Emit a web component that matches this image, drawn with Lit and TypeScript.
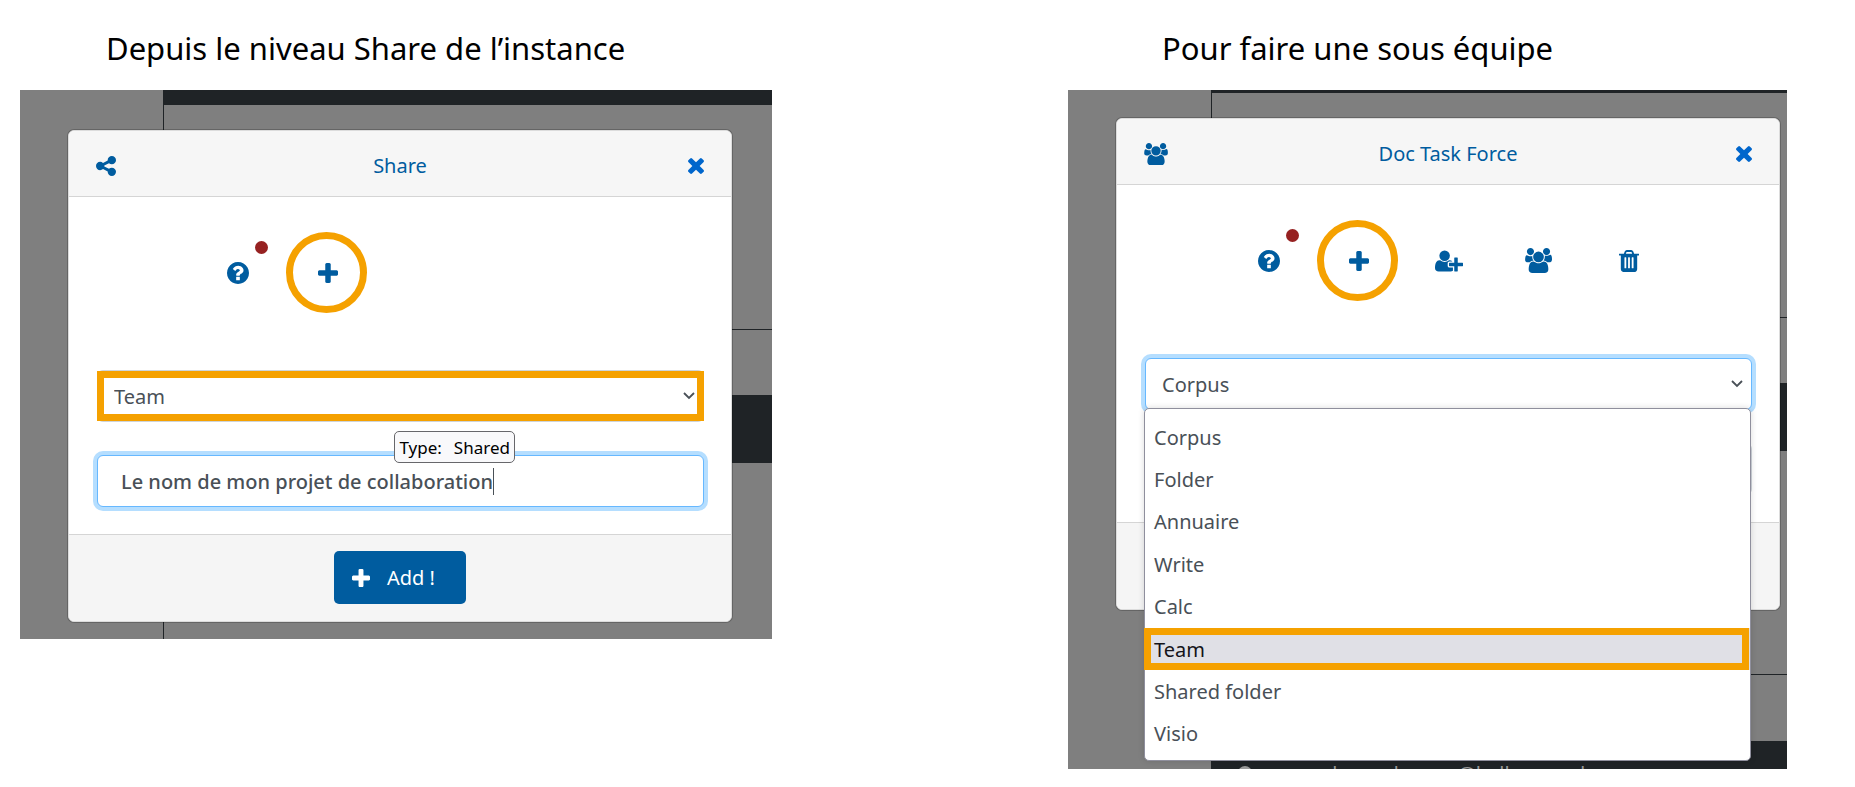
import { LitElement, html, css, nothing } from "lit";
import { customElement, property } from "lit/decorators.js";

type Glyph = { box: string; path: string };

const GLYPHS: Record<string, Glyph> = {
  share: {
    box: "0 128 1536 1536",
    path: "M1216 1024q133 0 226.500 93.500t93.500 226.500-93.500 226.500-226.500 93.500-226.500-93.500-93.500-226.500q0-12 2-34l-360-180q-92 86-218 86-133 0-226.500-93.500t-93.500-226.500 93.500-226.500 226.500-93.500q126 0 218 86l360-180q-2-22-2-34 0-133 93.500-226.500t226.500-93.500 226.500 93.500 93.500 226.500-93.500 226.500-226.500 93.500q-126 0-218-86l-360 180q2 22 2 34t-2 34l360 180q92-86 218-86z",
  },
  plus: {
    box: "0 0 1408 1408",
    path: "M1408 608v192q0 40-28 68t-68 28h-416v416q0 40-28 68t-68 28h-192q-40 0-68-28t-28-68v-416h-416q-40 0-68-28t-28-68v-192q0-40 28-68t68-28h416v-416q0-40 28-68t68-28h192q40 0 68 28t28 68v416h416q40 0 68 28t28 68z",
  },
  close: {
    box: "110 366 1188 1188",
    path: "M1298 1322q0 40-28 68l-136 136q-28 28-68 28t-68-28l-294-294-294 294q-28 28-68 28t-68-28l-136-136q-28-28-28-68t28-68l294-294-294-294q-28-28-28-68t28-68l136-136q28-28 68-28t68 28l294 294 294-294q28-28 68-28t68 28l136 136q28 28 28 68t-28 68l-294 294 294 294q28 28 28 68z",
  },
  help: {
    box: "128 128 1536 1536",
    path: "M1024 1376v-192q0-14-9-23t-23-9h-192q-14 0-23 9t-9 23v192q0 14 9 23t23 9h192q14 0 23-9t9-23zm256-672q0-88-55.500-163t-138.500-116-170-41q-243 0-371 213-15 24 8 42l132 100q7 6 19 6 16 0 25-12 53-68 86-92 34-24 86-24 48 0 85.500 26t37.500 59q0 38-20 61t-68 45q-63 28-115.500 86.500t-52.500 125.500v36q0 14 9 23t23 9h192q14 0 23-9t9-23q0-19 21.500-49.500t54.500-49.500q32-18 49-28.500t46-35 44.500-48 28-60.500 12.500-81zm384 192q0 209-103 385.500t-279.500 279.500-385.500 103-385.500-103-279.500-279.500-103-385.500 103-385.500 279.500-279.500 385.500-103 385.500 103 279.500 279.500 103 385.500z",
  },
  trash: {
    box: "192 128 1408 1536",
    path: "M704 1376v-704q0-14-9-23t-23-9h-64q-14 0-23 9t-9 23v704q0 14 9 23t23 9h64q14 0 23-9t9-23zm256 0v-704q0-14-9-23t-23-9h-64q-14 0-23 9t-9 23v704q0 14 9 23t23 9h64q14 0 23-9t9-23zm256 0v-704q0-14-9-23t-23-9h-64q-14 0-23 9t-9 23v704q0 14 9 23t23 9h64q14 0 23-9t9-23zm-544-992h448l-48-117q-7-9-17-11h-317q-10 2-17 11zm928 32v64q0 14-9 23t-23 9h-96v948q0 83-47 143.500t-113 60.500h-832q-66 0-113-58.500t-47-141.500v-952h-96q-14 0-23-9t-9-23v-64q0-14 9-23t23-9h309l70-167q15-37 54-63t79-26h320q40 0 79 26t54 63l70 167h309q14 0 23 9t9 23z",
  },
  userPlus: {
    box: "0 128 2048 1536",
    path: "M704 896q-159 0-271.500-112.500t-112.500-271.500 112.500-271.500 271.500-112.500 271.500 112.500 112.500 271.500-112.500 271.500-271.500 112.500zm960 128h352q13 0 22.500 9.500t9.500 22.500v192q0 13-9.500 22.500t-22.500 9.500h-352v352q0 13-9.500 22.500t-22.500 9.500h-192q-13 0-22.500-9.500t-9.500-22.500v-352h-352q-13 0-22.500-9.500t-9.500-22.500v-192q0-13 9.500-22.500t22.500-9.500h352v-352q0-13 9.500-22.500t22.500-9.500h192q13 0 22.500 9.500t9.500 22.500v352zm-736 224q0 52 38 90t90 38h256v238q-68 50-171 50h-874q-121 0-194-69t-73-190q0-53 3.500-103.500t14-109 26.500-108.500 43-97.500 62-81 85.500-53.500 111.500-20q19 0 39 17 79 61 154.500 91.500t164.500 30.500 164.500-30.500 154.500-91.500q20-17 39-17 132 0 217 96h-223q-52 0-90 38t-38 90v192z",
  },
  users: {
    box: "64 0 1920 1792",
    path: "M657 896q-162 5-265 128h-134q-82 0-138-40.500t-56-118.500q0-353 124-353 6 0 43.500 21t97.500 42.500 119 21.500q67 0 133-23-5 37-5 66 0 159 90 287zm1071 637q0 120-73 189.500t-194 69.500h-874q-121 0-194-69.500t-73-189.500q0-53 3.500-103.500t14-109 26.500-108.500 43-97.500 62-81 85.500-53.500 111.500-20q10 0 43 21.500t73 48 107 48 135 21.500 135-21.500 107-48 73-48 43-21.500q61 0 111.500 20t85.500 53.500 62 81 43 97.500 26.500 108.500 14 109 3.500 103.500zm-1024-1277q0 106-75 181t-181 75-181-75-75-181 75-181 181-75 181 75 75 181zm704 384q0 159-112.500 271.500t-271.500 112.500-271.500-112.500-112.500-271.500 112.500-271.500 271.500-112.500 271.500 112.500 112.500 271.500zm576 225q0 78-56 118.500t-138 40.500h-134q-103-123-265-128 90-128 90-287 0-29-5-66 66 23 133 23 59 0 119-21.500t97.500-42.500 43.500-21q124 0 124 353zm-128-609q0 106-75 181t-181 75-181-75-75-181 75-181 181-75 181 75 75 181z",
  },
};

const icon = (name: string, width: number, height: number) => html`
  <svg class="icon" width=${width} height=${height} viewBox=${GLYPHS[name].box} aria-hidden="true">
    <path fill="currentColor" d=${GLYPHS[name].path}></path>
  </svg>
`;

type Band = { kind: "dark" | "plain" | "line"; size: number; text?: string };

const SHARE_BANDS: Band[] = [
  { kind: "dark", size: 15 },
  { kind: "plain", size: 224 },
  { kind: "line", size: 1 },
  { kind: "plain", size: 65 },
  { kind: "dark", size: 68 },
];

const TEAM_BANDS: Band[] = [
  { kind: "dark", size: 3 },
  { kind: "plain", size: 224 },
  { kind: "line", size: 1 },
  { kind: "plain", size: 65 },
  { kind: "dark", size: 68 },
  { kind: "plain", size: 223 },
  { kind: "line", size: 1 },
  { kind: "plain", size: 66 },
  { kind: "dark", size: 28, text: "emma.lerou.demars@hello-round" },
];

const TYPES = ["Corpus", "Folder", "Annuaire", "Write", "Calc", "Team", "Shared folder", "Visio"];

@customElement("page-backdrop")
export class PageBackdrop extends LitElement {
  @property({ attribute: false }) bands: Band[] = [];

  static styles = css`
    :host {
      position: absolute;
      inset: 0;
      display: flex;
      overflow: hidden;
      background: #7f7f7f;
    }
    .rail {
      flex: none;
      width: 143px;
      border-right: 1px solid #1f2326;
    }
    .content {
      flex: 1;
      display: flex;
      flex-direction: column;
    }
    .band {
      flex: none;
      overflow: hidden;
    }
    .dark {
      background: #1f2326;
    }
    .line {
      background: #1f2326;
    }
    .account {
      display: flex;
      gap: 15px;
      padding: 19px 0 0 26px;
      color: #999;
      font-size: 20px;
      line-height: 28px;
    }
    .avatar {
      width: 14px;
      height: 14px;
      margin-top: 6px;
      border-radius: 50%;
      background: #999;
    }
  `;

  render() {
    return html`
      <div class="rail"></div>
      <div class="content">
        ${this.bands.map(
          (band) => html`
            <div class="band ${band.kind}" style="height: ${band.size}px">
              ${band.text
                ? html`<div class="account"><span class="avatar"></span><span>${band.text}</span></div>`
                : nothing}
            </div>
          `
        )}
      </div>
    `;
  }
}

@customElement("type-dialog")
export class TypeDialog extends LitElement {
  @property() heading = "";
  @property() type = "Team";
  @property() value = "";
  @property({ type: Boolean, reflect: true }) open = false;
  @property({ type: Boolean, reflect: true }) team = false;

  static styles = css`
    :host {
      position: relative;
      display: block;
      border: 1px solid #dcdcdc;
      border-radius: 6px;
      background: #fff;
      box-shadow: 0 0 0 1px rgba(0, 0, 0, 0.2);
      color: #495057;
      font-size: 20px;
    }
    button,
    select,
    input {
      margin: 0;
      padding: 0;
      border: 0;
      background: none;
      color: inherit;
      font: inherit;
      outline: none;
    }
    .icon {
      display: block;
    }
    .header {
      display: grid;
      grid-template-columns: 1fr auto 1fr;
      align-items: center;
      height: 65px;
      box-sizing: border-box;
      padding: 4px 27px 0;
      background: #f6f6f6;
      border-radius: 5px 5px 0 0;
      color: #005c9f;
    }
    .title {
      margin: 0;
      font-size: 20px;
      font-weight: 400;
      line-height: 28px;
    }
    .close {
      justify-self: end;
      color: #0066cc;
    }
    .body {
      border: solid #d5d5d5;
      border-width: 1px 0;
      padding: 35px 27px 27px 28px;
    }
    .toolbar {
      display: flex;
      margin-bottom: 57px;
      padding-left: 96px;
      color: #005c9f;
    }
    :host([team]) .toolbar {
      justify-content: center;
      padding-left: 0;
    }
    .tool {
      position: relative;
      display: grid;
      place-items: center;
      width: 90px;
      height: 81px;
    }
    .ringed::after {
      content: "";
      position: absolute;
      inset: 0 6px 0 3px;
      border: 7px solid #f5a100;
      border-radius: 50%;
    }
    .dot {
      position: absolute;
      top: 9px;
      left: 62px;
      width: 13px;
      height: 13px;
      border-radius: 50%;
      background: #962121;
    }
    .field {
      position: relative;
      display: flex;
      align-items: center;
      height: 52px;
      box-sizing: border-box;
      border: 1px solid #ced4da;
      border-radius: 6px;
      background: #fff;
    }
    .focused {
      border-color: #66b8ff;
      box-shadow: 0 0 0 4px #b5deff;
    }
    .field + .field {
      margin-top: 33px;
    }
    .marked::after {
      content: "";
      position: absolute;
      inset: 0 -1px;
      border: 7px solid #f5a100;
      pointer-events: none;
    }
    .select {
      appearance: none;
      width: 100%;
      height: 100%;
      padding: 0 36px 0 16px;
    }
    .chevron {
      position: absolute;
      right: 8px;
      pointer-events: none;
    }
    .input {
      field-sizing: content;
      min-width: 8px;
      margin-left: 23px;
      font-weight: 500;
    }
    .caret {
      width: 1px;
      height: 27px;
      background: #495057;
    }
    .tip {
      position: absolute;
      top: -25px;
      left: 49%;
      display: flex;
      gap: 12px;
      box-sizing: border-box;
      height: 32px;
      padding: 0 4px;
      border: 1px solid #67676b;
      border-radius: 5px;
      background: #f9f9fb;
      color: #000;
      font-size: 17px;
      line-height: 31px;
    }
    .footer {
      display: flex;
      justify-content: center;
      height: 86px;
      box-sizing: border-box;
      padding: 16px;
      background: #f5f5f5;
      border-radius: 0 0 5px 5px;
    }
    .add {
      display: flex;
      align-items: center;
      gap: 17px;
      height: 53px;
      padding: 0 31px 0 18px;
      border-radius: 5px;
      background: #005c9f;
      color: #fff;
    }
    .menu {
      position: absolute;
      z-index: 2;
      top: 49px;
      left: -2px;
      right: 0;
      display: grid;
      grid-auto-rows: 1fr;
      height: 353px;
      box-sizing: border-box;
      margin: 0;
      padding: 7px 0 5px;
      border: 1px solid #8f8f9d;
      border-radius: 5px;
      background: #fff;
      box-shadow: 0 0 6px rgba(0, 0, 0, 0.15);
      list-style: none;
    }
    .option {
      position: relative;
      display: flex;
      align-items: center;
      padding: 0 9px;
    }
    .current {
      background: #e0e0e6;
      color: #15141a;
    }
    .current::after {
      content: "";
      position: absolute;
      inset: 0 1px 0 -1px;
      border: 7px solid #f5a100;
    }
  `;

  private tool(name: string, label: string, width: number, height: number, ringed = false) {
    return html`
      <button class="tool ${ringed ? "ringed" : ""}" type="button" aria-label=${label}>
        ${icon(name, width, height)} ${name === "help" ? html`<span class="dot"></span>` : nothing}
      </button>
    `;
  }

  render() {
    return html`
      <header class="header">
        ${this.team ? icon("users", 24, 22) : icon("share", 20, 20)}
        <h3 class="title">${this.heading}</h3>
        <button class="close" type="button" aria-label="Close">${icon("close", 16, 16)}</button>
      </header>
      <div class="body">
        <div class="toolbar">
          ${this.tool("help", "Help", 22, 22)} ${this.tool("plus", "Add", 20, 20, true)}
          ${this.team
            ? html`
                ${this.tool("userPlus", "Add member", 28, 22)} ${this.tool("users", "Members", 27, 25)}
                ${this.tool("trash", "Delete", 20, 22)}
              `
            : nothing}
        </div>
        <div class="field ${this.open ? "focused" : "marked"}">
          <select class="select" aria-label="Type">
            ${TYPES.map((name) => html`<option ?selected=${name === this.type}>${name}</option>`)}
          </select>
          <svg class="chevron" width="12" height="8" viewBox="0 0 12 8" aria-hidden="true">
            <path d="M1 1l5 5 5-5" fill="none" stroke="currentColor" stroke-width="1.8"></path>
          </svg>
          ${this.open
            ? html`
                <ul class="menu" role="listbox" aria-label="Type">
                  ${TYPES.map(
                    (name) => html`
                      <li class="option ${name === "Team" ? "current" : ""}" role="option">${name}</li>
                    `
                  )}
                </ul>
              `
            : nothing}
        </div>
        <div class="field ${this.open ? "" : "focused"}">
          <input class="input" type="text" aria-label="Name" .value=${this.value} />
          ${this.open
            ? nothing
            : html`
                <span class="caret"></span>
                <span class="tip" role="tooltip"><span>Type:</span><span>Shared</span></span>
              `}
        </div>
      </div>
      <footer class="footer">
        ${this.open
          ? nothing
          : html`<button class="add" type="button">${icon("plus", 18, 18)}<span>Add !</span></button>`}
      </footer>
    `;
  }
}

@customElement("app-root")
export class AppRoot extends LitElement {
  static styles = css`
    :host {
      display: block;
      min-height: 100vh;
      background: #fff;
      color: #000;
      font-family: "Noto Sans", "Open Sans", sans-serif;
    }
    .page {
      display: grid;
      grid-template-columns: 752fr 719fr;
      column-gap: 296px;
      align-items: start;
      padding: 0 68px 0 20px;
    }
    .caption {
      margin: 0;
      padding: 26px 0 20px 86px;
      font-size: 31px;
      font-weight: 400;
      line-height: 44px;
      white-space: nowrap;
    }
    .second .caption {
      padding-left: 94px;
    }
    .shot {
      position: relative;
      padding: 40px 40px 17px 48px;
    }
    .second .shot {
      padding: 28px 7px 159px 48px;
    }
  `;

  render() {
    return html`
      <main class="page">
        <section class="first">
          <h2 class="caption">Depuis le niveau Share de l’instance</h2>
          <div class="shot">
            <page-backdrop .bands=${SHARE_BANDS}></page-backdrop>
            <type-dialog heading="Share" value="Le nom de mon projet de collaboration"></type-dialog>
          </div>
        </section>
        <section class="second">
          <h2 class="caption">Pour faire une sous équipe</h2>
          <div class="shot">
            <page-backdrop .bands=${TEAM_BANDS}></page-backdrop>
            <type-dialog heading="Doc Task Force" type="Corpus" team open></type-dialog>
          </div>
        </section>
      </main>
    `;
  }
}
